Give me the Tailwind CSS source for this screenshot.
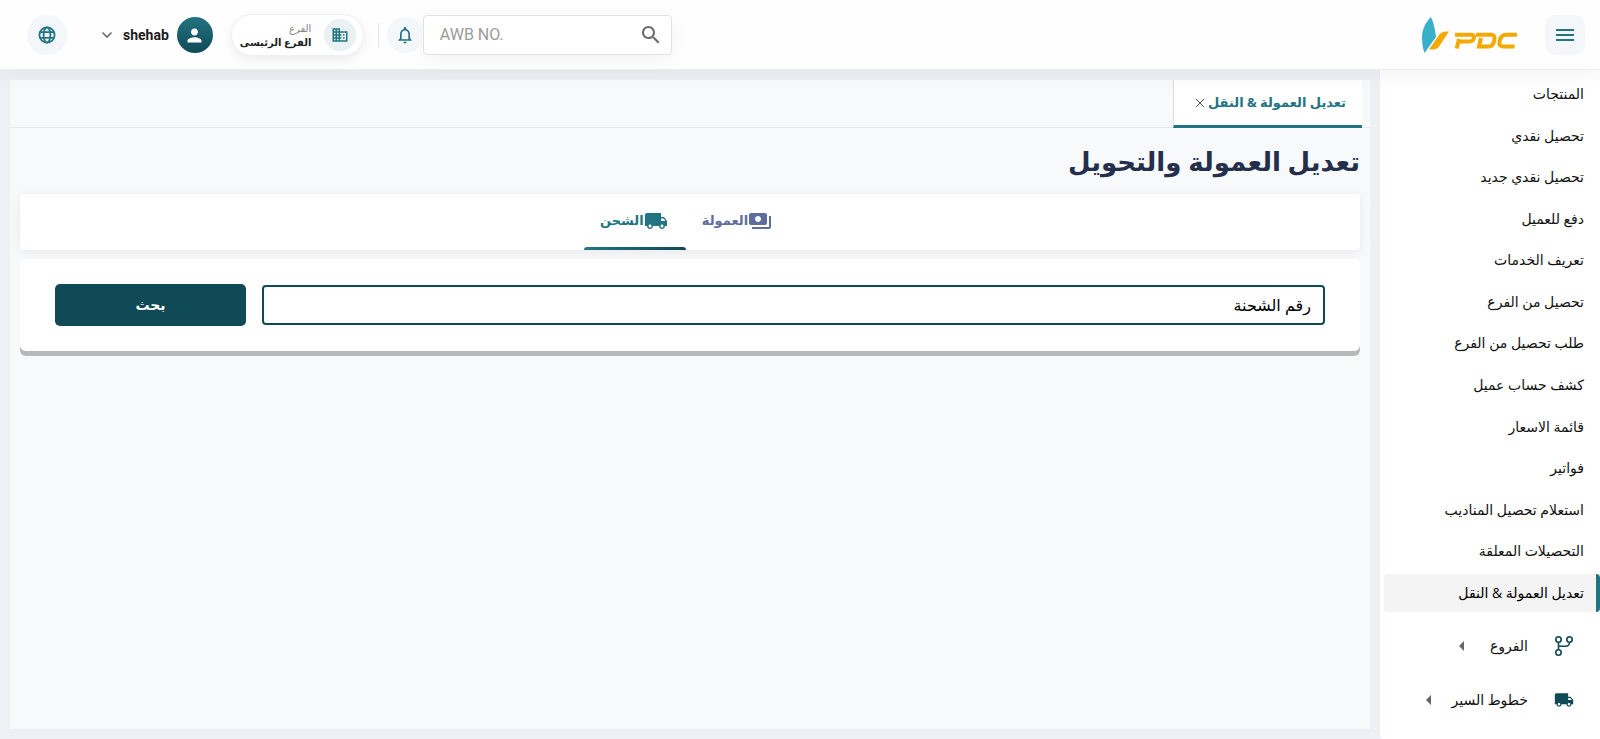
<!DOCTYPE html>
<html lang="ar" dir="rtl">
<head>
<meta charset="utf-8">
<meta name="viewport" content="width=device-width, initial-scale=1">
<title>تعديل العمولة والتحويل</title>
<script src="https://cdn.jsdelivr.net/npm/@tailwindcss/browser@4"></script>
</head>
<body class="flex min-h-screen flex-col bg-[#edf1f6] font-['Open_Sans','DejaVu_Sans',sans-serif] text-[#1c1c1c]">

<header class="relative z-10 flex h-[70px] items-center border-b border-[#eceef0] bg-[#fefefe] pt-px pr-[15px] pl-[27px] shadow-[0_4px_20px_rgba(0,0,0,0.05)]">
  <button type="button" aria-label="القائمة" class="flex size-10 items-center justify-center rounded-[10px] bg-[#f3f7fa] text-[#237483]">
    <svg class="size-6" viewBox="0 0 24 24" fill="currentColor"><path d="M3 18h18v-2H3v2zm0-5h18v-2H3v2zm0-7v2h18V6H3z"/></svg>
  </button>
  <a href="#" aria-label="PDC" class="mr-7">
    <svg class="h-9 w-24" viewBox="0 0 96 36">
      <path d="M10 0C4 6 1 13 1 20c0 6 .6 11 2.500 16L15 20C14 13 13 6 10 0z" fill="#38b0c9"/>
      <path d="M28 14.500c-7 0-8.500 1-11 5L8 32.500c7 .3 8.500-.5 11-4.500z" fill="#f5a800"/>
      <g fill="none" stroke="#f5a800" stroke-width="4"><path d="M34 17.800h16.500q3.200 0 2.400 3.300-.9 3.400-4.400 3.400H37.500M38 22l-2.300 9.500"/><path d="M55 17.800h15.500q4 0 2.700 6-1.200 5.700-5.700 5.700h-9.500l2-8.500"/><path d="M96 17.800H85q-5 0-6.400 6-1.200 5.700 3.400 5.700h11.500"/></g>
    </svg>
  </a>

  <form role="search" class="mr-auto flex h-10 w-[249px] items-center rounded border border-[#e2e2e2] bg-white pr-2 pl-4 shadow-[0_4px_20px_rgba(0,0,0,0.05)]">
    <button type="submit" aria-label="بحث" class="text-[#6b6b6b]">
      <svg class="size-6" viewBox="0 0 24 24" fill="currentColor"><path d="M15.500 14h-.79l-.28-.27C15.410 12.590 16 11.110 16 9.500 16 5.910 13.090 3 9.500 3S3 5.910 3 9.500 5.910 16 9.500 16c1.610 0 3.090-.59 4.230-1.570l.27.28v.79l5 4.990L20.490 19l-4.990-5zm-6 0C7.010 14 5 11.990 5 9.500S7.010 5 9.500 5 14 7.010 14 9.500 11.990 14 9.500 14z"/></svg>
    </button>
    <input type="text" dir="ltr" aria-label="AWB NO." placeholder="AWB NO." class="min-w-0 flex-1 bg-transparent font-['Roboto'] text-base outline-none placeholder:text-[#9b9b9b]">
  </form>
  <button type="button" aria-label="الإشعارات" class="flex size-9 items-center justify-center rounded-full bg-[#f3f7fa] text-[#237483]">
    <svg class="size-5" viewBox="0 0 24 24" fill="currentColor"><path d="M12 22c1.100 0 2-.9 2-2h-4c0 1.100.89 2 2 2zm6-6v-5c0-3.070-1.640-5.640-4.500-6.320V4c0-.83-.67-1.500-1.500-1.500s-1.500.67-1.500 1.500v.68C7.630 5.360 6 7.920 6 11v5l-2 2v1h16v-1l-2-2zm-2 1H8v-6c0-2.480 1.510-4.500 4-4.500s4 2.020 4 4.500v6z"/></svg>
  </button>
  <span class="mr-2 h-6 w-px bg-[#e3e6e8]"></span>
  <div class="mr-[14px] flex h-[42px] w-[133px] items-center justify-between rounded-full border border-[#eef0f2] bg-white pr-[7px] pl-2 shadow-[0_4px_12px_rgba(0,0,0,0.07)]">
    <span class="flex size-8 shrink-0 items-center justify-center rounded-full bg-[#e9f1f3] text-[#237483]">
      <svg class="size-[18px]" viewBox="0 0 24 24" fill="currentColor"><path d="M12 7V3H2v18h20V7H12zM6 19H4v-2h2v2zm0-4H4v-2h2v2zm0-4H4V9h2v2zm0-4H4V5h2v2zm4 12H8v-2h2v2zm0-4H8v-2h2v2zm0-4H8V9h2v2zm0-4H8V5h2v2zm10 12h-8v-2h2v-2h-2v-2h2v-2h-2V9h8v10zm-2-8h-2v2h2v-2zm0 4h-2v2h2v-2z"/></svg>
    </span>
    <div class="leading-[14px] whitespace-nowrap">
      <p class="text-[10px] text-[#858585]">الفرع</p>
      <p class="text-[10px] font-bold leading-[14px]">الفرع الرئيسى</p>
    </div>
  </div>
  <button type="button" class="mr-[18px] flex items-center gap-2">
    <span class="flex size-9 items-center justify-center rounded-full bg-linear-to-b from-[#237483] to-[#0f4a56] text-white">
      <svg class="size-[21px]" viewBox="0 0 24 24" fill="currentColor"><path d="M12 12c2.210 0 4-1.790 4-4s-1.790-4-4-4-4 1.790-4 4 1.790 4 4 4zm0 2c-2.670 0-8 1.340-8 4v2h16v-2c0-2.660-5.330-4-8-4z"/></svg>
    </span>
    <span class="font-['Roboto'] text-sm font-bold">shehab</span>
    <svg class="size-4 text-[#6b6b6b]" viewBox="0 0 16 16" fill="none" stroke="currentColor" stroke-width="1.600"><path d="M3.500 5.500 8 10l4.500-4.500"/></svg>
  </button>
  <button type="button" aria-label="اللغة" class="mr-8 flex size-10 items-center justify-center rounded-full bg-[#f3f7fa] text-[#237483]">
    <svg class="size-[18px]" viewBox="0 0 18 18" fill="none" stroke="currentColor" stroke-width="1.800"><circle cx="9" cy="9" r="7.600"/><ellipse cx="9" cy="9" rx="3.400" ry="7.600"/><path d="M1.800 6.200h14.400M1.800 11.800h14.400"/></svg>
  </button>
</header>

<div class="flex flex-1">
  <aside class="flex w-[220px] shrink-0 flex-col rounded-bl bg-white pt-[5px] pb-3 text-sm text-[#111]">
    <ul class="flex flex-1 flex-col justify-between">
      <li><a href="#" class="flex h-[38px] items-center px-4">المنتجات</a></li>
      <li><a href="#" class="flex h-[38px] items-center px-4">تحصيل نقدي</a></li>
      <li><a href="#" class="flex h-[38px] items-center px-4">تحصيل نقدي جديد</a></li>
      <li><a href="#" class="flex h-[38px] items-center px-4">دفع للعميل</a></li>
      <li><a href="#" class="flex h-[38px] items-center px-4">تعريف الخدمات</a></li>
      <li><a href="#" class="flex h-[38px] items-center px-4">تحصيل من الفرع</a></li>
      <li><a href="#" class="flex h-[38px] items-center px-4">طلب تحصيل من الفرع</a></li>
      <li><a href="#" class="flex h-[38px] items-center px-4">كشف حساب عميل</a></li>
      <li><a href="#" class="flex h-[38px] items-center px-4">قائمة الاسعار</a></li>
      <li><a href="#" class="flex h-[38px] items-center px-4">فواتير</a></li>
      <li><a href="#" class="flex h-[38px] items-center px-4">استعلام تحصيل المناديب</a></li>
      <li><a href="#" class="flex h-[38px] items-center px-4">التحصيلات المعلقة</a></li>
      <li><a href="#" aria-current="page" class="ml-1 flex h-[38px] items-center rounded-sm border-r-4 border-[#237483] bg-[#f4f4f4] px-3 text-black">تعديل العمولة &amp; النقل</a></li>
    </ul>
    <button type="button" class="mt-[7px] flex h-[54px] items-center pr-[26px]">
      <svg class="size-5 text-[#0f4a56]" viewBox="0 0 20 20" fill="none" stroke="currentColor" stroke-width="1.600"><circle cx="4.500" cy="3.500" r="2.700"/><circle cx="4.500" cy="16.500" r="2.700"/><circle cx="15.500" cy="3.500" r="2.700"/><path d="M4.500 6.200v7.600M15.500 6.200q0 4-4 4h-7"/></svg>
      <span class="mr-[26px]">الفروع</span>
      <svg class="mr-[26px] h-[10px] w-[5px] text-[#666]" viewBox="0 0 5 10" fill="currentColor"><path d="M5 0v10L0 5z"/></svg>
    </button>
    <button type="button" class="flex h-[54px] items-center pr-[26px]">
      <svg class="size-5 text-[#0f4a56]" viewBox="0 0 24 24" fill="currentColor"><path d="M20 8h-3V4H3c-1.100 0-2 .9-2 2v11h2c0 1.660 1.340 3 3 3s3-1.340 3-3h6c0 1.660 1.340 3 3 3s3-1.340 3-3h2v-5l-3-4zM6 18.500c-.83 0-1.500-.67-1.500-1.500s.67-1.500 1.500-1.500 1.500.67 1.500 1.500-.67 1.500-1.500 1.500zm13.500-9l1.960 2.500H17V9.500h2.500zm-1.500 9c-.83 0-1.500-.67-1.500-1.500s.67-1.500 1.500-1.500 1.500.67 1.500 1.500-.67 1.500-1.500 1.500z"/></svg>
      <span class="mr-[26px]">خطوط السير</span>
      <svg class="mr-5 h-[10px] w-[5px] text-[#666]" viewBox="0 0 5 10" fill="currentColor"><path d="M5 0v10L0 5z"/></svg>
    </button>
  </aside>

  <div class="flex min-w-0 flex-1 p-[10px]">
    <main class="flex-1 bg-[#f8f9fb]">
      <div class="flex h-12 border-b border-[#e6e8ea] pr-2">
        <div class="flex h-12 w-[189px] items-center gap-1 border-b-3 border-l border-b-[#237483] border-l-[#dcdee0] bg-white pr-4">
          <a href="#" class="text-[13px] font-bold whitespace-nowrap text-[#237483]">تعديل العمولة &amp; النقل</a>
          <button type="button" aria-label="إغلاق" class="text-[#555]"><svg class="size-2" viewBox="0 0 8 8" stroke="currentColor" stroke-width="1"><path d="M0 0l8 8M8 0L0 8"/></svg></button>
        </div>
      </div>
      <div class="px-[10px]">
        <h1 class="flex h-[66px] items-center text-[26px] font-bold text-[#242f4b]">تعديل العمولة والتحويل</h1>
        <div role="tablist" class="flex h-14 justify-center rounded bg-white pr-2 shadow-[0_2px_12px_rgba(0,0,0,0.07)]">
          <button type="button" role="tab" aria-selected="false" class="flex h-14 w-[102px] items-center justify-center pb-[3px] text-[13px] font-bold text-[#5f6d9c]">
            <svg class="size-6" viewBox="0 0 24 24" fill="currentColor"><path d="M19 14V6c0-1.100-.9-2-2-2H3c-1.100 0-2 .9-2 2v8c0 1.100.9 2 2 2h14c1.100 0 2-.9 2-2zm-9-1c-1.660 0-3-1.340-3-3s1.340-3 3-3 3 1.340 3 3-1.340 3-3 3zm13-6v11c0 1.100-.9 2-2 2H4v-2h17V7h2z"/></svg>العمولة
          </button>
          <button type="button" role="tab" aria-selected="true" class="relative flex h-14 w-[102px] items-center justify-end pb-[3px] pl-4 text-[13px] font-bold text-[#237483]">
            <svg class="size-6" viewBox="0 0 24 24" fill="currentColor"><path d="M20 8h-3V4H3c-1.100 0-2 .9-2 2v11h2c0 1.660 1.340 3 3 3s3-1.340 3-3h6c0 1.660 1.340 3 3 3s3-1.340 3-3h2v-5l-3-4zM6 18.500c-.83 0-1.500-.67-1.500-1.500s.67-1.500 1.500-1.500 1.500.67 1.500 1.500-.67 1.500-1.500 1.500zm13.500-9l1.960 2.500H17V9.500h2.500zm-1.500 9c-.83 0-1.500-.67-1.500-1.500s.67-1.500 1.500-1.500 1.500.67 1.500 1.500-.67 1.500-1.500 1.500z"/></svg>الشحن
            <span class="absolute inset-x-0 bottom-0 h-[3px] rounded-t bg-linear-to-r from-[#237483] to-[#0f4a56]"></span>
          </button>
        </div>
        <form class="mt-[9px] flex items-center gap-4 rounded-md bg-white px-[35px] py-[25px] shadow-[0_5px_0_#b8b8b8]">
          <input type="text" aria-label="رقم الشحنة" placeholder="رقم الشحنة" class="h-10 min-w-0 flex-1 rounded border-2 border-[#0f4a56] bg-white px-3 text-base outline-none placeholder:text-black">
          <button type="submit" class="h-[42px] w-[191px] rounded-[5px] bg-[#0f4a56] text-sm font-bold text-white">بحث</button>
        </form>
      </div>
    </main>
  </div>
</div>
</body>
</html>
